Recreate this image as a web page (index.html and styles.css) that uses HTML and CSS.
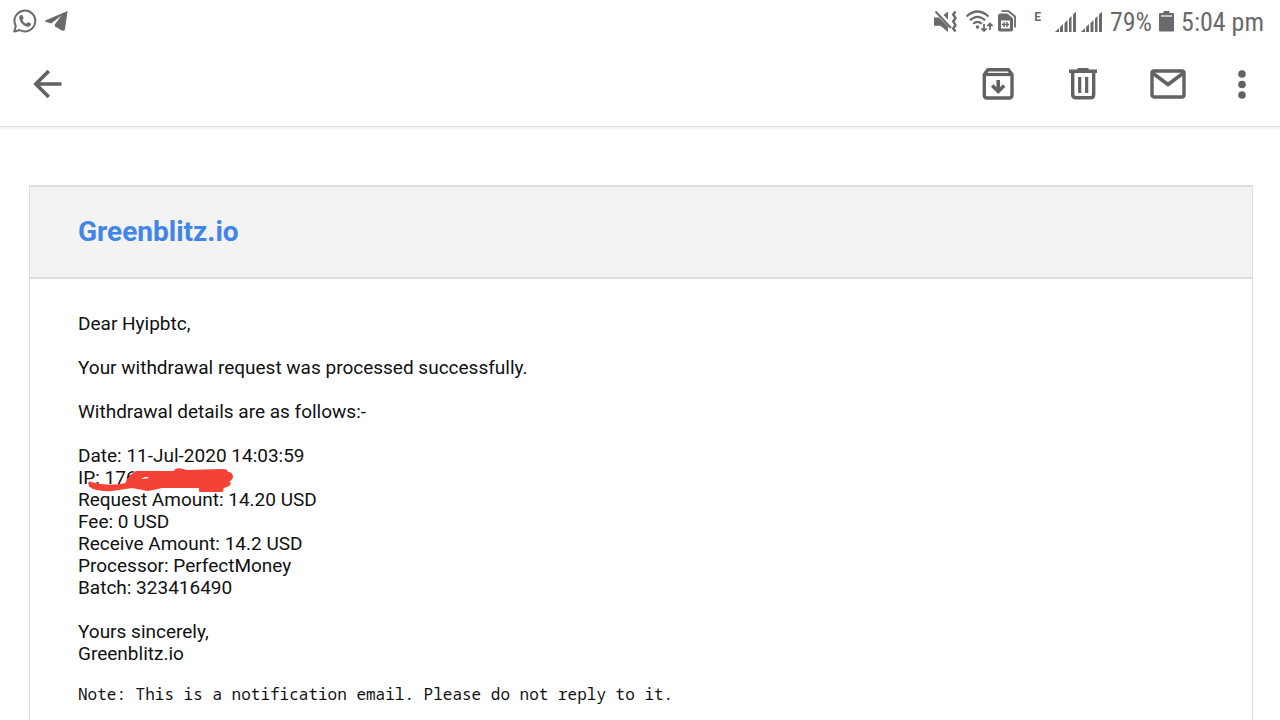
FILE: index.html
```html
<!DOCTYPE html>
<html lang="en">
<head>
    <meta charset="UTF-8">
    <meta name="viewport" content="width=device-width, initial-scale=1.0">
    <title>Greenblitz.io</title>
    <link rel="stylesheet" href="styles.css">
</head>
<body>
    <div class="status-bar">
        <div class="status-left">
            <svg width="26" height="26" viewBox="0 0 26 26">
                <path d="M2.2 23.6 L3.8 18 A10.4 10.4 0 1 1 7.8 22 Z" fill="none" stroke="#6a6a6a" stroke-width="2" stroke-linejoin="round"/>
                <path d="M9.6 7 C8 7 7 8.6 7.3 10.2 C8 14.6 12 18.4 16 18.7 C17.8 18.8 19.2 17.6 19.1 15.8 L16 14.1 L14.4 15.8 C12.6 15 11.2 13.6 10.4 11.9 L11.7 10.3 L10.5 7.2 Z" fill="#6a6a6a"/>
            </svg>
            <svg width="26" height="26" viewBox="0 0 26 26">
                <path d="M23.6 3 L1.2 12.5 Q0.6 13.3 1.6 13.7 L7.2 15.6 L17.4 7.6 L10.6 16.8 L11 18.4 L18 22.6 Q20.4 23.4 20.9 21.4 Z" fill="#6a6a6a"/>
            </svg>
        </div>
        <div class="status-right">
            <div class="status-icons">
                <svg width="28" height="26" viewBox="0 0 28 26">
                    <path d="M1 9.5 H6 L15 18.5 V24 L7.5 17.8 H1 Z M10.5 7 L15 3.5 V11.4 Z" fill="#6a6a6a"/>
                    <path d="M2.5 3.5 L18 20" stroke="#6a6a6a" stroke-width="2" fill="none"/>
                    <path d="M22.5 3.5 L20.2 6.5 L22.5 10 L20.2 13.5 L22.5 17 L20.2 20.5 L22.5 23.5" stroke="#6a6a6a" stroke-width="2.4" fill="none"/>
                </svg>
                <svg width="28" height="26" viewBox="0 0 28 26">
                    <g fill="none" stroke="#6a6a6a" stroke-width="2.2">
                        <path d="M1.5 8.5 Q12.5 -1.5 23.5 8.5"/>
                        <path d="M4.8 12.3 Q12.5 5.3 20.2 12.3"/>
                        <path d="M8.2 15.8 Q12.5 12 16.8 15.8"/>
                    </g>
                    <circle cx="12.5" cy="19" r="1.8" fill="#6a6a6a"/>
                    <path d="M19 16 V23 M16.4 20.4 L19 23 L21.6 20.4 M25 22 V15.5 M22.4 18.1 L25 15.5 L27.6 18.1" fill="none" stroke="#6a6a6a" stroke-width="1.8"/>
                </svg>
                <svg width="20" height="26" viewBox="0 0 20 26">
                    <path d="M4.5 3.2 H11.5 L18 8.5 V19.5" fill="none" stroke="#6a6a6a" stroke-width="1.8"/>
                    <path d="M3.5 5.5 H10.5 L16 10.5 V21.5 Q16 23.5 14 23.5 H3 Q1 23.5 1 21.5 V8 Q1 5.5 3.5 5.5 Z" fill="#6a6a6a"/>
                    <path d="M4 12.5 H13 V20.5 H4 Z" fill="#fff"/>
                    <path d="M4.8 16.5 H12.2 M7 14 V19 M10 14 V19" stroke="#6a6a6a" stroke-width="1.4"/>
                </svg>
            </div>
            <span class="network">E</span>
            <div class="status-icons">
                <svg width="22" height="26" viewBox="0 0 22 26">
                    <path d="M0 24 L4 20 V24 Z M5 19 L8 16 V24 H5 Z M9.5 15 L12.5 12 V24 H9.5 Z M14 10.5 L16.5 8 V24 H14 Z M18 6.5 L21 3.5 V24 H18 Z" fill="#6a6a6a"/>
                </svg>
                <svg width="22" height="26" viewBox="0 0 22 26">
                    <path d="M0 24 L4 20 V24 Z M5 19 L8 16 V24 H5 Z M9.5 15 L12.5 12 V24 H9.5 Z M14 10.5 L16.5 8 V24 H14 Z M18 6.5 L21 3.5 V24 H18 Z" fill="#6a6a6a"/>
                </svg>
            </div>
            <span class="status-text">79%</span>
            <div class="status-icons">
                <svg width="15" height="26" viewBox="0 0 15 26">
                    <path d="M4.5 3 H10.5 V5 H14 Q15 5 15 6 V22.5 Q15 23.5 14 23.5 H1 Q0 23.5 0 22.5 V6 Q0 5 1 5 H4.5 Z" fill="#6a6a6a"/>
                    <path d="M2 7 H13 V9 H2 Z" fill="#c4c4c4"/>
                </svg>
            </div>
            <span class="status-text">5:04 pm</span>
        </div>
    </div>

    <header class="toolbar">
        <button type="button" aria-label="Back">
            <svg width="40" height="40" viewBox="0 0 40 40">
                <path d="M33.5 20 H8 M20.8 7 L7.8 20 L20.8 33" fill="none" stroke="#606266" stroke-width="3.6"/>
            </svg>
        </button>
        <div class="actions">
            <button type="button" aria-label="Archive">
                <svg width="40" height="40" viewBox="0 0 40 40">
                    <path d="M6.3 10.5 V31 Q6.3 34 9.3 34 H31 Q34 34 34 31 V10.5 L30.5 5.8 H9.8 Z" fill="none" stroke="#606266" stroke-width="3.4" stroke-linejoin="round"/>
                    <path d="M7 10.5 H33.5" stroke="#606266" stroke-width="3.2"/>
                    <path d="M20.2 16 V27 M14.2 21.5 L20.2 27.5 L26.2 21.5" fill="none" stroke="#606266" stroke-width="3.6"/>
                </svg>
            </button>
            <button type="button" aria-label="Delete">
                <svg width="40" height="40" viewBox="0 0 40 40">
                    <path d="M6 5.5 H14.5 V4 H25.5 V5.5 H34 V9 H6 Z" fill="#606266"/>
                    <path d="M9.7 8 V30.5 Q9.7 33.8 13 33.8 H27.5 Q30.7 33.8 30.7 30.5 V8" fill="none" stroke="#606266" stroke-width="3.4"/>
                    <path d="M16.7 13 V29 M23.7 13 V29" stroke="#606266" stroke-width="3.2"/>
                </svg>
            </button>
            <button type="button" aria-label="Mark unread">
                <svg width="40" height="40" viewBox="0 0 40 40">
                    <rect x="4" y="7" width="32" height="26" rx="2" fill="none" stroke="#606266" stroke-width="3.4"/>
                    <path d="M4.5 9 L20 20.5 L35.5 9" fill="none" stroke="#606266" stroke-width="3.6"/>
                </svg>
            </button>
            <button type="button" aria-label="More options">
                <svg width="18" height="40" viewBox="0 0 18 40">
                    <g fill="#606266">
                        <circle cx="9" cy="10" r="3.8"/>
                        <circle cx="9" cy="20.5" r="3.8"/>
                        <circle cx="9" cy="31" r="3.8"/>
                    </g>
                </svg>
            </button>
        </div>
    </header>

    <main class="mail">
        <div class="mail-header">
            <h1><a href="#">Greenblitz.io</a></h1>
        </div>
        <div class="mail-body">
            <p>Dear Hyipbtc,</p>
            <p>Your withdrawal request was processed successfully.</p>
            <p>Withdrawal details are as follows:-</p>
            <p>
                Date: 11-Jul-2020 14:03:59<br>
                <span class="hidden-ip">IP: 176<svg class="scribble" width="160" height="28" viewBox="0 0 160 28">
                    <path d="M13 17 Q10 15 12 20 Q18 25 34 24 L54 21 L70 24 L84 21 L122 21 L122 25 L144 25 L145 21 Q155 19 150 15 Q156 12 153 8 Q151 6 148 8 Q151 4 144 4 L108 5 Q99 1 96 6 L58 6 Q50 11 48 18 Q30 22 13 17 Z" fill="#f44336" stroke="#f44336" stroke-width="2" stroke-linejoin="round"/>
                    <path d="M63 13 L67 11 L71 11 L69 12.5 Z" fill="#fff"/>
                </svg></span><br>
                Request Amount: 14.20 USD<br>
                Fee: 0 USD<br>
                Receive Amount: 14.2 USD<br>
                Processor: PerfectMoney<br>
                Batch: 323416490
            </p>
            <p>
                Yours sincerely,<br>
                Greenblitz.io
            </p>
            <p class="note">Note: This is a notification email. Please do not reply to it.</p>
        </div>
    </main>
</body>
</html>
```
FILE: styles.css
```css
body {
    font-family: Roboto, sans-serif;
    margin: 0;
    background-color: #fff;
    color: #111;
}
svg {
    display: block;
    flex: none;
}
.status-bar {
    display: flex;
    justify-content: space-between;
    align-items: center;
    height: 44px;
    padding: 0 16px 0 12px;
    color: #6a6a6a;
}
.status-left {
    display: flex;
    gap: 6px;
    padding-bottom: 2px;
}
.status-right {
    display: flex;
    align-items: center;
    gap: 7px;
}
.status-icons {
    display: flex;
    gap: 4px;
    padding-bottom: 2px;
}
.network {
    align-self: flex-start;
    margin: 0 7px 0 10px;
    font-size: 12px;
    font-weight: bold;
    line-height: 18px;
}
.status-text {
    font-family: "Roboto Condensed", "Liberation Sans Narrow", Roboto, sans-serif;
    font-size: 26px;
    line-height: 28px;
}
.toolbar {
    display: flex;
    justify-content: space-between;
    align-items: center;
    height: 83px;
    padding: 0 29px 3px 28px;
    box-sizing: border-box;
    border-bottom: 1px solid #e6e6e6;
    box-shadow: 0 2px 2px rgba(0, 0, 0, 0.05);
}
.toolbar button {
    padding: 0;
    background: none;
    border: none;
    cursor: pointer;
}
.actions {
    display: flex;
    gap: 45px;
}
.mail {
    margin: 58px 27px 28px 29px;
    border: 1px solid #dedede;
    border-top-width: 2px;
}
.mail-header {
    padding: 28px 48px;
    background-color: #f3f3f3;
    border-bottom: 2px solid #dedede;
}
.mail-header h1 {
    margin: 0;
    font-size: 28px;
    line-height: 34px;
}
.mail-header a {
    color: #4285ea;
    text-decoration: none;
}
.mail-body {
    padding: 34px 48px;
    font-size: 19px;
    line-height: 22px;
}
.mail-body p {
    margin: 0 0 22px;
}
.hidden-ip {
    position: relative;
}
.scribble {
    position: absolute;
    top: 0;
    left: 0;
}
.mail-body .note {
    margin-top: -4px;
    font-family: "Noto Sans Mono", "DejaVu Sans Mono", monospace;
    font-size: 16px;
}
```
